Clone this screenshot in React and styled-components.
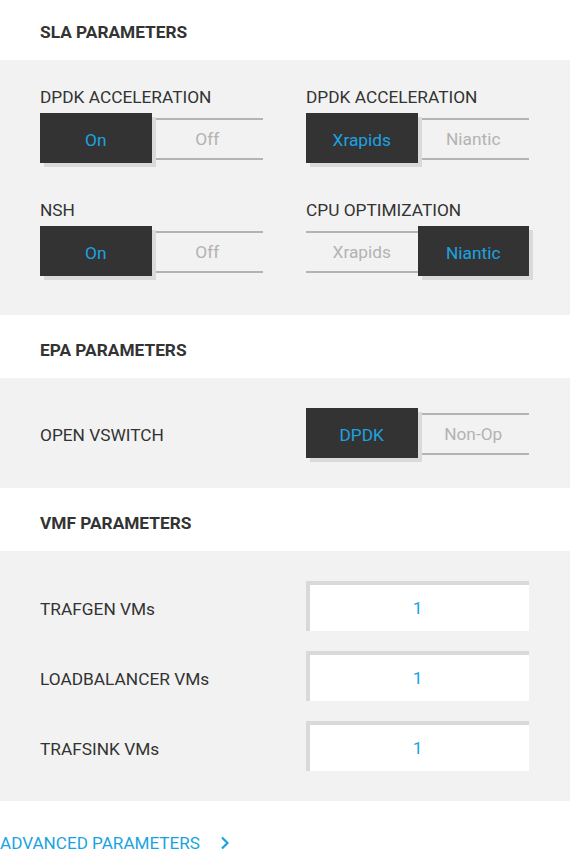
import React from "react";
import styled, { createGlobalStyle } from "styled-components";

const Global = createGlobalStyle`
  html, body { margin: 0; padding: 0; background: #ffffff; }
  body { font-family: Roboto, "Liberation Sans", sans-serif; color: #333333; }
  * { box-sizing: border-box; }
`;

const BLUE = "#1ba3e1";
const FS = "17.3px";

const Page = styled.div`
  width: 570px;
  display: flex;
  flex-direction: column;
`;

const SectionHeader = styled.h2`
  margin: 0;
  height: ${(p) => (p.$first ? "60px" : "63px")};
  padding: ${(p) => (p.$first ? "22px" : "25px")} 40px 0;
  font-size: ${FS};
  line-height: 20px;
  font-weight: 700;
  color: #333333;
  background: #ffffff;
`;

const Panel = styled.div`
  background: #f2f2f2;
  padding: ${(p) => p.$pad};
`;

const ToggleGrid = styled.div`
  display: grid;
  grid-template-columns: 223px 223px;
  column-gap: 43px;
  row-gap: 37px;
`;

const Field = styled.div`
  display: flex;
  flex-direction: column;
  gap: 6px;
`;

const Label = styled.div`
  font-size: ${FS};
  line-height: 20px;
  color: #333333;
  white-space: nowrap;
  padding-top: ${(p) => p.$drop || "0px"};
`;

const Toggle = styled.div`
  width: 223px;
  height: 50px;
  display: grid;
  grid-template-columns: 1fr 1fr;
  align-items: center;
`;

const Option = styled.div`
  display: flex;
  align-items: center;
  justify-content: center;
  font-size: ${FS};
  ${(p) =>
    p.$active
      ? `
    height: 50px;
    padding-top: 3px;
    background: #333333;
    color: ${BLUE};
    box-shadow: 4px 4px 0 #dadada;
    position: relative;
    z-index: 1;
  `
      : `
    height: 42px;
    margin-top: 1px;
    padding-top: 1px;
    border-top: 2px solid #b3b3b3;
    border-bottom: 2px solid #b3b3b3;
    color: #b3b3b3;
  `}
`;

const Row = styled.div`
  display: grid;
  grid-template-columns: 266px 223px;
  align-items: center;
`;

const Rows = styled.div`
  display: flex;
  flex-direction: column;
  gap: 20px;
`;

const NumberBox = styled.div`
  height: 50px;
  width: 223px;
  background: #ffffff;
  border-top: 4px solid #d9d9d9;
  border-left: 4px solid #d9d9d9;
  display: flex;
  align-items: center;
  justify-content: center;
  padding-right: 4px;
  color: ${BLUE};
  font-size: ${FS};
`;

const Footer = styled.a`
  display: flex;
  align-items: center;
  gap: 20px;
  padding-top: 32px;
  color: ${BLUE};
  font-size: 17.1px;
  line-height: 20px;
  text-decoration: none;
`;

function ToggleSwitch({ options, active }) {
  return (
    <Toggle>
      {options.map((o, i) => (
        <Option key={o} $active={i === active}>
          {o}
        </Option>
      ))}
    </Toggle>
  );
}

export default function App() {
  return (
    <Page>
      <Global />
      <SectionHeader $first>SLA PARAMETERS</SectionHeader>
      <Panel $pad="27px 40px 39px">
        <ToggleGrid>
          <Field>
            <Label>DPDK ACCELERATION</Label>
            <ToggleSwitch options={["On", "Off"]} active={0} />
          </Field>
          <Field>
            <Label>DPDK ACCELERATION</Label>
            <ToggleSwitch options={["Xrapids", "Niantic"]} active={0} />
          </Field>
          <Field>
            <Label>NSH</Label>
            <ToggleSwitch options={["On", "Off"]} active={0} />
          </Field>
          <Field>
            <Label>CPU OPTIMIZATION</Label>
            <ToggleSwitch options={["Xrapids", "Niantic"]} active={1} />
          </Field>
        </ToggleGrid>
      </Panel>
      <SectionHeader>EPA PARAMETERS</SectionHeader>
      <Panel $pad="30px 40px">
        <Row>
          <Label $drop="4px">OPEN VSWITCH</Label>
          <ToggleSwitch options={["DPDK", "Non-Op"]} active={0} />
        </Row>
      </Panel>
      <SectionHeader>VMF PARAMETERS</SectionHeader>
      <Panel $pad="30px 40px">
        <Rows>
          {["TRAFGEN VMs", "LOADBALANCER VMs", "TRAFSINK VMs"].map((l) => (
            <Row key={l}>
              <Label $drop="6px">{l}</Label>
              <NumberBox>1</NumberBox>
            </Row>
          ))}
        </Rows>
      </Panel>
      <Footer href="#">
        ADVANCED PARAMETERS
        <svg width="10" height="14" viewBox="0 0 10 14" fill="none">
          <path d="M2 1.5 L7.5 7 L2 12.5" stroke={BLUE} strokeWidth="2.2" />
        </svg>
      </Footer>
    </Page>
  );
}
